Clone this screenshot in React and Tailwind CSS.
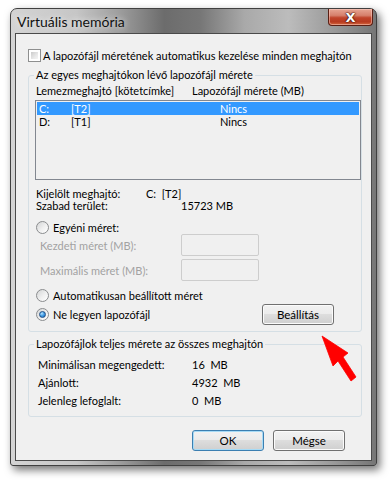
import React from 'react';

const font = "font-['Lato','Noto_Sans',sans-serif]";

const Radio = ({ checked }) => (
  <div className="w-[13px] h-[13px] rounded-full border border-[#8a8c8e] bg-[linear-gradient(135deg,#d4d5d6_0%,#f0f0f0_55%,#ffffff_100%)] flex items-center justify-center shrink-0">
    {checked && (
      <div className="w-[7px] h-[7px] rounded-full border border-[#1f4f86] bg-[radial-gradient(circle_at_35%_30%,#b9e3ff_0%,#4aa3e8_45%,#0f5eb5_100%)]" />
    )}
  </div>
);

const Checkbox = () => (
  <div className="w-[13px] h-[13px] border border-[#8e8f8f] bg-white p-[2px] shrink-0">
    <div className="w-full h-full bg-[linear-gradient(135deg,#cbcbcb_0%,#e8e8e8_60%,#f5f5f5_100%)]" />
  </div>
);

const Button = ({ children, primary, className = '' }) => (
  <div
    className={
      'w-[72px] h-[21px] rounded-[3px] border flex items-center justify-center text-[11.5px] text-black ' +
      'bg-[linear-gradient(180deg,#f2f2f2_0%,#ebebeb_48%,#dddddd_50%,#cfcfcf_100%)] ' +
      (primary
        ? 'border-[#3c7fb1] shadow-[inset_0_0_0_1px_#a7dbf6] '
        : 'border-[#707070] shadow-[inset_0_0_0_1px_#fbfbfb] ') +
      className
    }
  >
    {children}
  </div>
);

const TextBox = () => (
  <div className="w-[78px] h-[22px] rounded-[2px] border border-[#cdcdcd] bg-[#f0f0f0]" />
);

export default function App() {
  return (
    <div className={`w-[392px] h-[482px] bg-white relative overflow-hidden text-[11px] leading-[13px] text-black whitespace-nowrap ${font}`}>
      {/* window */}
      <div className="ml-[10px] mt-[8px] w-[367px] h-[458px] rounded-t-[7px] rounded-b-[3px] border border-[#404040] flex flex-col shadow-[3px_4px_9px_rgba(0,0,0,0.55)] bg-[linear-gradient(90deg,#d4d4d4_0%,#c6c6c6_18%,#9c9c9c_30%,#6c6c6c_42%,#777777_52%,#a9a9a9_64%,#bcbcbc_76%,#9b9b9b_88%,#767676_100%)]">
        {/* title bar */}
        <div className="h-[24px] flex items-start justify-between pl-[6px] pr-[3px]">
          <div className="mt-[5px] text-[14px] leading-[16px] text-[#111] [text-shadow:0_0_6px_rgba(255,255,255,0.9)]">
            Virtuális memória
          </div>
          <div className="w-[45px] h-[17px] rounded-b-[4px] border border-t-0 border-[#5a1f14] bg-[linear-gradient(180deg,#e6a593_0%,#d6806c_40%,#c0442b_55%,#b83a20_80%,#d4693f_100%)] shadow-[inset_0_0_0_1px_rgba(255,210,200,0.5)] flex items-center justify-center">
            <span className="text-white font-bold text-[13px] leading-[13px] font-['DejaVu_Sans',sans-serif] [text-shadow:0_0_1px_#3a1008,0_0_1px_#3a1008,0_0_2px_#3a1008]">
              X
            </span>
          </div>
        </div>

        {/* client area */}
        <div className="flex-1 mx-[4px] mb-[4px] border border-[#4a4a4a] bg-[#f0f0f0] flex flex-col">
          {/* checkbox row */}
          <div className="mt-[15px] ml-[12px] h-[13px] flex items-center gap-[2px]">
            <Checkbox />
            <span>A lapozófájl méretének automatikus kezelése minden meghajtón</span>
          </div>

          {/* group 1 */}
          <div className="relative mt-[13px] ml-[12px] w-[334px] h-[257px] rounded-[3px] border border-[#d5dfe5] flex flex-col">
            <span className="absolute -top-[8px] left-[5px] px-[2px] bg-[#f0f0f0] leading-[14px]">
              Az egyes meghajtókon lévő lapozófájl mérete
            </span>

            <div className="mt-[7px] h-[14px] flex items-center">
              <span className="ml-[7px] w-[156px]">Lemezmeghajtó [kötetcímke]</span>
              <span>Lapozófájl mérete (MB)</span>
            </div>

            <div className="mt-[3px] ml-[6px] w-[326px] h-[80px] border border-[#828790] bg-[#f0f0f0] p-[1px] flex flex-col">
              <div className="h-[13px] flex items-center bg-[#3399ff] text-white">
                <span className="ml-[2px] w-[32px]">C:</span>
                <span className="w-[149px]">[T2]</span>
                <span>Nincs</span>
              </div>
              <div className="h-[13px] flex items-center">
                <span className="ml-[2px] w-[32px]">D:</span>
                <span className="w-[149px]">[T1]</span>
                <span>Nincs</span>
              </div>
            </div>

            <div className="mt-[7px] h-[12px] flex items-center">
              <span className="ml-[7px] w-[110px]">Kijelölt meghajtó:</span>
              <span>C:&nbsp;&nbsp;[T2]</span>
            </div>
            <div className="h-[12px] flex items-center">
              <span className="ml-[7px] w-[145px]">Szabad terület:</span>
              <span>15723 MB</span>
            </div>

            <div className="mt-[10px] ml-[7px] h-[13px] flex items-center gap-[4px]">
              <Radio />
              <span>Egyéni méret:</span>
            </div>

            <div className="h-[22px] flex items-center">
              <span className="ml-[11px] w-[141px] text-[#a2a2a2]">Kezdeti méret (MB):</span>
              <TextBox />
            </div>
            <div className="mt-[3px] h-[22px] flex items-center">
              <span className="ml-[11px] w-[141px] text-[#a2a2a2]">Maximális méret (MB):</span>
              <TextBox />
            </div>

            <div className="mt-[8px] ml-[7px] h-[13px] flex items-center gap-[4px]">
              <Radio />
              <span>Automatikusan beállított méret</span>
            </div>

            <div className="mt-[2px] ml-[7px] pr-[27px] h-[21px] flex items-center gap-[4px]">
              <Radio checked />
              <span>Ne legyen lapozófájl</span>
              <Button className="ml-auto">Beállítás</Button>
            </div>
          </div>

          {/* group 2 */}
          <div className="relative mt-[12px] ml-[12px] w-[334px] h-[73px] rounded-[3px] border border-[#d5dfe5] flex flex-col">
            <span className="absolute -top-[8px] left-[5px] px-[2px] bg-[#f0f0f0] leading-[14px]">
              Lapozófájlok teljes mérete az összes meghajtón
            </span>
            <div className="mt-[10px] flex flex-col">
              <div className="h-[18px] flex items-center">
                <span className="ml-[9px] w-[154px]">Minimálisan megengedett:</span>
                <span>16&nbsp;&nbsp;MB</span>
              </div>
              <div className="h-[18px] flex items-center">
                <span className="ml-[9px] w-[154px]">Ajánlott:</span>
                <span>4932&nbsp;&nbsp;MB</span>
              </div>
              <div className="h-[18px] flex items-center">
                <span className="ml-[9px] w-[154px]">Jelenleg lefoglalt:</span>
                <span>0&nbsp;&nbsp;MB</span>
              </div>
            </div>
          </div>

          {/* buttons */}
          <div className="mt-[13px] pr-[26px] flex justify-end gap-[9px]">
            <Button primary>OK</Button>
            <Button>Mégse</Button>
          </div>
        </div>
      </div>

      {/* red arrow annotation */}
      <svg className="absolute left-0 top-0 pointer-events-none" width="392" height="482" viewBox="0 0 392 482">
        <polygon
          points="322,336 333,366 338,361 351,381 356,377 343,357 348,353"
          fill="#ff0000"
          stroke="#ff0000"
          strokeWidth="0.8"
          strokeLinejoin="round"
        />
      </svg>
    </div>
  );
}
